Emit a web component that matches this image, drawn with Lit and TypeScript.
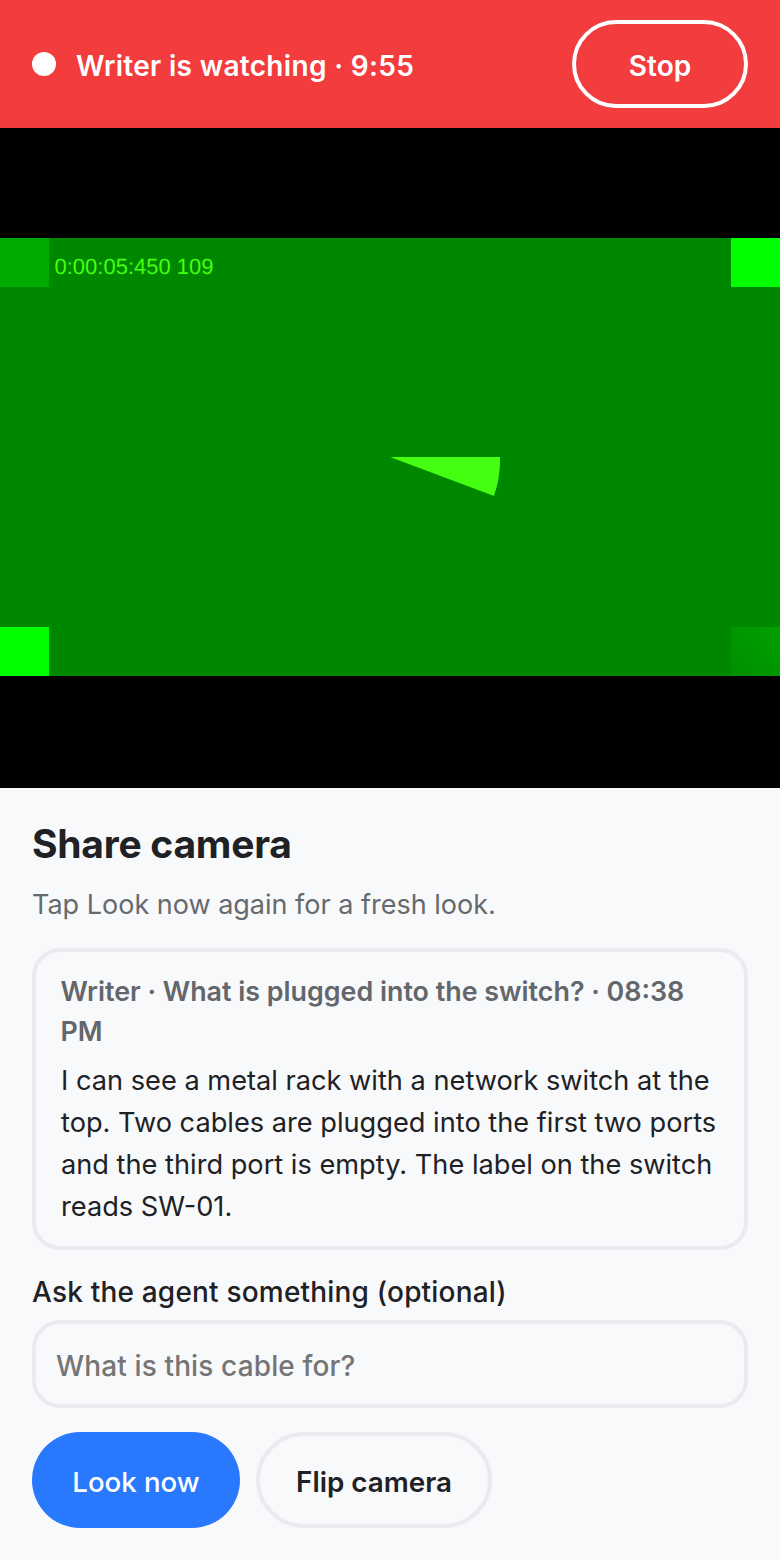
import { LitElement, html, css } from "lit";
import { customElement } from "lit/decorators.js";

@customElement("app-root")
export class AppRoot extends LitElement {
  static styles = css`
    :host { display: block; width: 780px; height: 1560px; background: #f8f9fb; font-family: Inter, "Noto Sans", sans-serif; color: #202124; overflow: hidden; }
    * { box-sizing: border-box; }
    .bar { height: 128px; background: #f23c3d; color: #fff; display: flex; align-items: center; justify-content: space-between; padding: 0 32px; }
    .status { display: flex; align-items: center; gap: 20px; font-size: 28px; font-weight: 600; line-height: 34px; letter-spacing: 0.32px; }
    .status-text { padding-top: 4px; }
    .dot { width: 24px; height: 24px; border-radius: 50%; background: #fff; }
    .stop { width: 176px; height: 88px; border: 4px solid #fff; border-radius: 44px; background: transparent; color: #fff; font: 600 28px Inter, sans-serif; padding: 4px 0 0; }
    .video { display: block; width: 780px; height: 660px; background: #000; }
    .video svg { display: block; }
    .stamp { font-family: "Liberation Sans", sans-serif; font-size: 22px; fill: #44ff11; text-rendering: geometricPrecision; }
    .sheet { padding: 32px 32px; }
    h1 { margin: 0; font-size: 39px; line-height: 48px; font-weight: 700; letter-spacing: -0.25px; }
    .hint { margin: 17px 0 0; font-size: 27px; line-height: 40px; color: #666a6e; }
    .card { margin-top: 23px; height: 302px; border: 4px solid #e9ebee; border-radius: 28px; padding: 19px 23px 19px 25px; }
    .meta { font-size: 26.85px; font-weight: 600; line-height: 40px; color: #63666b; margin-left: -0.5px; }
    .text { margin-top: 9px; font-size: 27.2px; line-height: 42px; }
    .label { display: block; margin-top: 22px; font-size: 28px; font-weight: 550; letter-spacing: 0.19px; line-height: 40px; }
    .input { margin-top: 8px; height: 88px; border: 4px solid #e9ebee; border-radius: 28px; padding: 4px 20px 0 20px; display: flex; align-items: center; font-size: 28px; font-weight: 550; letter-spacing: 0.13px; color: #757575; }
    .actions { display: flex; gap: 16px; margin-top: 24px; }
    .btn { height: 96px; border-radius: 48px; font: 600 28px Inter, sans-serif; padding: 4px 0 0; }
    .primary { width: 208px; border: 0; background: #2979ff; color: #fff; font-size: 27.6px; font-weight: 550; }
    .secondary { width: 236px; border: 4px solid #e9ebee; background: transparent; color: #202124; font-size: 27.8px; }
  `;

  render() {
    return html`
      <div class="bar">
        <div class="status"><span class="dot"></span><span class="status-text">Writer is watching · 9:55</span></div>
        <button class="stop">Stop</button>
      </div>
      <div class="video">
        <svg width="780" height="660" viewBox="0 0 780 660">
          <defs>
            <linearGradient id="br" x1="0" y1="1" x2="1" y2="0">
              <stop offset="0" stop-color="#008f00" /><stop offset="1" stop-color="#00a000" />
            </linearGradient>
          </defs>
          <rect x="0" y="110" width="780" height="438" fill="#008700" />
          <rect x="0" y="110" width="49" height="49" fill="#00ab00" />
          <rect x="731" y="110" width="49" height="49" fill="#00ff00" />
          <rect x="0" y="499" width="49" height="49" fill="#00ff00" />
          <rect x="731" y="499" width="49" height="49" fill="url(#br)" />
          <path d="M390 329 L500 329 A110 110 0 0 1 494 368 Z" fill="#44ff11" />
          <text class="stamp" x="54.5" y="146">0:00:05:450 109</text>
        </svg>
      </div>
      <div class="sheet">
        <h1>Share camera</h1>
        <p class="hint">Tap Look now again for a fresh look.</p>
        <div class="card">
          <div class="meta">Writer · What is plugged into the switch? · 08:38 PM</div>
          <div class="text">I can see a metal rack with a network switch at the top. Two cables are plugged into the first two ports and the third port is empty. The label on the switch reads SW-01.</div>
        </div>
        <label class="label">Ask the agent something (optional)</label>
        <div class="input">What is this cable for?</div>
        <div class="actions">
          <button class="btn primary">Look now</button>
          <button class="btn secondary">Flip camera</button>
        </div>
      </div>
    `;
  }
}
